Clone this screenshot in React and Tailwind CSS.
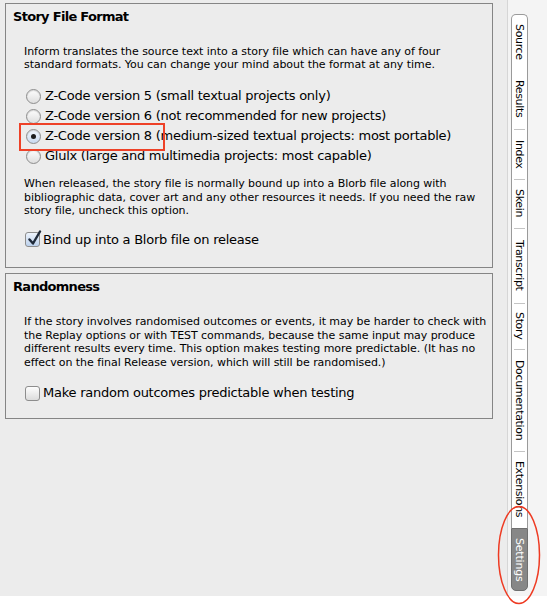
import React from 'react';

const tabs = [
  { label: 'Source', h: 'h-[54px]', sep: false },
  { label: 'Results', h: 'h-[60px]', sep: false },
  { label: 'Index', h: 'h-[50px]', sep: true },
  { label: 'Skein', h: 'h-[49px]', sep: true },
  { label: 'Transcript', h: 'h-[75px]', sep: true },
  { label: 'Story', h: 'h-[46px]', sep: true },
  { label: 'Documentation', h: 'h-[102px]', sep: true },
  { label: 'Extensions', h: 'h-[77px]', sep: true },
];

function Radio({ checked, children }) {
  return (
    <div className="flex items-center h-[20px]">
      <span
        className={
          'ml-[20px] w-[15px] h-[15px] rounded-full border border-[#8d8d8d] flex items-center justify-center shadow-[inset_0_1px_1px_rgba(0,0,0,0.15)] ' +
          (checked
            ? 'bg-gradient-to-b from-[#f4f8fd] to-[#c9daf0]'
            : 'bg-gradient-to-b from-[#fdfdfd] to-[#dedede]')
        }
      >
        {checked && <span className="w-[5px] h-[5px] rounded-full bg-[#1c1c1c]" />}
      </span>
      <span className="ml-[4px] text-[13px] leading-[16px] tracking-[-0.25px] text-black whitespace-nowrap">{children}</span>
    </div>
  );
}

function Checkbox({ checked, children }) {
  return (
    <div className="flex items-center h-[20px]">
      <span
        className={
          'relative ml-[19px] w-[15px] h-[15px] rounded-[3px] border border-[#8d8d8d] ' +
          (checked
            ? 'bg-gradient-to-b from-[#eef4fc] to-[#bcd1ec]'
            : 'bg-gradient-to-b from-[#fdfdfd] to-[#dcdcdc]')
        }
      >
        {checked && (
          <svg className="absolute left-[1px] top-[-3px]" width="15" height="16" viewBox="0 0 15 16">
            <path d="M2.5 9.5 L6 13.5 L13 1.5" fill="none" stroke="#1f2a3a" strokeWidth="2.4" strokeLinecap="round" strokeLinejoin="round" />
          </svg>
        )}
      </span>
      <span className="ml-[3px] text-[13px] leading-[16px] tracking-[-0.25px] text-black whitespace-nowrap">{children}</span>
    </div>
  );
}

export default function App() {
  return (
    <div className="relative w-[548px] h-[608px] bg-white flex font-['DejaVu_Sans',sans-serif] overflow-hidden">
      <div className="w-[508px] h-[596px] bg-[#ececec] border-r border-[#d6d6d6] pl-[5px] pt-[3px] flex flex-col gap-[5px]">
        <div className="relative w-[488px] h-[265px] border border-[#858585] pl-[7px] pt-[5px]">
          <h2 className="text-[13px] leading-[16px] font-bold tracking-[-0.7px] text-black">Story File Format</h2>
          <p className="mt-[20px] pl-[11px] text-[11px] leading-[13px] tracking-[-0.05px] text-black whitespace-nowrap">
            Inform translates the source text into a story file which can have any of four
            <br />
            standard formats. You can change your mind about the format at any time.
          </p>
          <div className="mt-[15px] -ml-[7px]">
            <Radio>Z-Code version 5 (small textual projects only)</Radio>
            <Radio>Z-Code version 6 (not recommended for new projects)</Radio>
            <Radio checked>Z-Code version 8 (medium-sized textual projects: most portable)</Radio>
            <Radio>Glulx (large and multimedia projects: most capable)</Radio>
          </div>
          <p className="mt-[11px] pl-[11px] text-[11px] leading-[13.5px] tracking-[-0.05px] text-black whitespace-nowrap">
            When released, the story file is normally bound up into a Blorb file along with
            <br />
            bibliographic data, cover art and any other resources it needs. If you need the raw
            <br />
            story file, uncheck this option.
          </p>
          <div className="mt-[12px] -ml-[7px]">
            <Checkbox checked>Bind up into a Blorb file on release</Checkbox>
          </div>
          <div className="absolute left-[13px] top-[119px] w-[146px] h-[28px] border-2 border-[#ee4127]" />
        </div>

        <div className="w-[488px] h-[146px] border border-[#858585] pl-[7px] pt-[5px]">
          <h2 className="text-[13px] leading-[16px] font-bold tracking-[-0.7px] text-black">Randomness</h2>
          <p className="mt-[20px] pl-[11px] text-[11px] leading-[13.5px] tracking-[-0.05px] text-black whitespace-nowrap">
            If the story involves randomised outcomes or events, it may be harder to check with
            <br />
            the Replay options or with TEST commands, because the same input may produce
            <br />
            different results every time. This option makes testing more predictable. (It has no
            <br />
            effect on the final Release version, which will still be randomised.)
          </p>
          <div className="mt-[14px] -ml-[7px]">
            <Checkbox>Make random outcomes predictable when testing</Checkbox>
          </div>
        </div>
      </div>

      <div className="w-[39px] h-[596px] bg-[#f4f4f4] pl-[3px] pt-[14px]">
        <div className="w-[17px] flex flex-col">
          <div className="bg-white border border-[#9a9a9a] rounded-t-[5px] border-b-0">
            {tabs.map((t) => (
              <div key={t.label} className={'relative flex items-center justify-center ' + t.h}>
                {t.sep && <div className="absolute top-0 left-[2px] right-[2px] h-px bg-[#c4c4c4]" />}
                <span className="[writing-mode:vertical-rl] text-[11px] leading-[13px] tracking-[-0.35px] text-black whitespace-nowrap">
                  {t.label}
                </span>
              </div>
            ))}
          </div>
          <div className="h-[63px] bg-[#878787] border border-[#6f6f6f] rounded-b-[5px] flex items-center justify-center">
            <span className="[writing-mode:vertical-rl] text-[11px] leading-[13px] tracking-[-0.2px] text-white whitespace-nowrap">
              Settings
            </span>
          </div>
        </div>
      </div>

      <svg className="absolute left-[496px] top-[505px]" width="48" height="101" viewBox="0 0 48 101">
        <ellipse cx="23" cy="50" rx="20.5" ry="48.5" fill="none" stroke="#ee3a22" strokeWidth="1.5" />
      </svg>
    </div>
  );
}
